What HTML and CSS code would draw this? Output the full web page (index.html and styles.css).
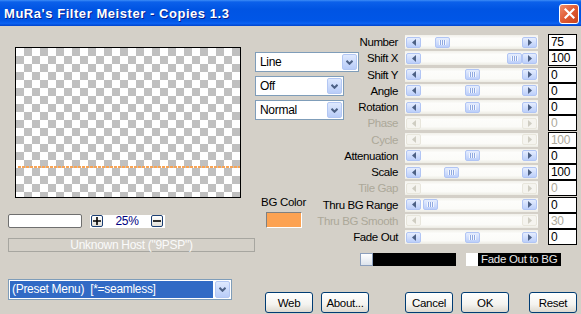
FILE: index.html
```html
<!DOCTYPE html>
<html lang="en">
<head>
    <meta charset="UTF-8">
    <title>MuRa's Filter Meister - Copies 1.3</title>
    <link rel="stylesheet" href="styles.css">
</head>
<body>
    <div class="window">
        <div class="titlebar">
            <span class="title">MuRa's Filter Meister - Copies 1.3</span>
            <span class="close">
                <svg width="11" height="11" viewBox="0 0 11 11"><path d="M1.5 1.5L9.5 9.5M9.5 1.5L1.5 9.5" stroke="#fff" stroke-width="2.2" stroke-linecap="square"/></svg>
            </span>
        </div>

        <div class="client">
            <!-- preview side -->
            <div class="left">
                <div class="preview"><div class="guide"></div></div>

                <div class="zoom-row">
                    <span class="field"></span>
                    <span class="zoom-ctl">
                        <span class="pm"><svg width="8" height="8" viewBox="0 0 8 8"><path d="M0 4H8M4 0V8" stroke="#000" stroke-width="1.6"/></svg></span>
                        <span class="pct">25%</span>
                        <span class="pm"><svg width="8" height="8" viewBox="0 0 8 8"><path d="M0 4H8" stroke="#000" stroke-width="1.6"/></svg></span>
                    </span>
                </div>

                <div class="host">Unknown Host ("9PSP")</div>

                <div class="combo preset">
                    <span class="text">(Preset Menu)  [*=seamless]</span>
                    <span class="drop"><svg width="7" height="5" viewBox="0 0 7 5"><polyline points="0.5,0.8 3.5,3.8 6.5,0.8" fill="none" stroke="#4d6185" stroke-width="2"/></svg></span>
                </div>
            </div>

            <!-- controls side -->
            <div class="right">
                <div class="top">
                    <div class="mid">
                        <div class="combo wide">
                            <span class="text">Line</span>
                            <span class="drop"><svg width="7" height="5" viewBox="0 0 7 5"><polyline points="0.5,0.8 3.5,3.8 6.5,0.8" fill="none" stroke="#4d6185" stroke-width="2"/></svg></span>
                        </div>
                        <div class="combo short">
                            <span class="text">Off</span>
                            <span class="drop"><svg width="7" height="5" viewBox="0 0 7 5"><polyline points="0.5,0.8 3.5,3.8 6.5,0.8" fill="none" stroke="#4d6185" stroke-width="2"/></svg></span>
                        </div>
                        <div class="combo short">
                            <span class="text">Normal</span>
                            <span class="drop"><svg width="7" height="5" viewBox="0 0 7 5"><polyline points="0.5,0.8 3.5,3.8 6.5,0.8" fill="none" stroke="#4d6185" stroke-width="2"/></svg></span>
                        </div>

                        <div class="bg-color">
                            <span>BG Color</span>
                            <span class="swatch"></span>
                        </div>
                    </div>

                    <div class="params" id="params"></div>
                </div>

                <div class="fade-row">
                    <span class="knob"></span>
                    <span class="black"></span>
                    <span class="check"></span>
                    <span class="fade-label">Fade Out to BG</span>
                </div>

                <div class="buttons">
                    <span class="btn">Web</span>
                    <span class="btn">About...</span>
                    <span class="btn cancel">Cancel</span>
                    <span class="btn">OK</span>
                    <span class="btn reset">Reset</span>
                </div>
            </div>
        </div>
    </div>

    <script>
        // label, thumb offset in px (null = disabled), value
        var rows = [
            ["Number", 14, "75"],
            ["Shift X", 86, "100"],
            ["Shift Y", 44, "0"],
            ["Angle", 44, "0"],
            ["Rotation", 44, "0"],
            ["Phase", null, "0"],
            ["Cycle", null, "100"],
            ["Attenuation", 44, "0"],
            ["Scale", 23, "100"],
            ["Tile Gap", null, "0"],
            ["Thru BG Range", 2, "0"],
            ["Thru BG Smooth", null, "30"],
            ["Fade Out", 44, "0"]
        ];

        var leftArrow = '<svg width="4" height="7" viewBox="0 0 4 7"><polygon points="4,0 0,3.5 4,7"/></svg>';
        var rightArrow = '<svg width="4" height="7" viewBox="0 0 4 7"><polygon points="0,0 4,3.5 0,7"/></svg>';

        var html = "";
        for (var i = 0; i < rows.length; i++) {
            var r = rows[i];
            var off = r[1] === null ? " off" : "";
            html += '<span class="label' + off + '">' + r[0] + '</span>';
            html += '<span class="bar' + off + '">';
            html += '<span class="arr">' + leftArrow + '</span>';
            html += '<span class="track">';
            if (r[1] !== null) {
                html += '<span class="thumb" style="margin-left:' + r[1] + 'px"></span>';
            }
            html += '</span>';
            html += '<span class="arr">' + rightArrow + '</span>';
            html += '</span>';
            html += '<span class="val' + off + '">' + r[2] + '</span>';
        }
        document.getElementById("params").innerHTML = html;
    </script>
</body>
</html>
```

FILE: styles.css
```css
* {
    margin: 0;
    padding: 0;
    box-sizing: border-box;
}

body {
    background: #d4d0c8;
    font-family: "Liberation Sans", Arial, sans-serif;
    font-size: 11px;
    letter-spacing: -0.3px;
    color: #000;
}

.window {
    width: 581px;
    height: 314px;
    overflow: hidden;
    display: flex;
    flex-direction: column;
}

/* title bar */
.titlebar {
    height: 26px;
    flex: none;
    display: flex;
    align-items: center;
    justify-content: space-between;
    padding: 1px 2px 0 4px;
    background: linear-gradient(#3d8df7 0, #0b60ea 2px, #0054e3 35%, #0056e7 80%, #0b62f2 90%, #0043cc 100%);
}

.title {
    color: #fff;
    font-weight: bold;
    font-size: 13px;
    letter-spacing: 0.55px;
    text-shadow: 1px 1px #0a1e8c;
}

.close {
    width: 20px;
    height: 20px;
    border: 1px solid #fff;
    border-radius: 3px;
    background: linear-gradient(135deg, #f08d6b, #e05a33 50%, #c8431c);
    display: flex;
    align-items: center;
    justify-content: center;
}

.client {
    flex: 1;
    display: flex;
}

/* left side */
.left {
    width: 255px;
    flex: none;
    padding: 21px 0 0 8px;
    display: flex;
    flex-direction: column;
    align-items: flex-start;
}

.preview {
    width: 226px;
    height: 151px;
    margin-left: 7px;
    border: 1px solid #000;
    background-color: #fff;
    background-image: conic-gradient(#c0c0c0 0 25%, transparent 0 50%, #c0c0c0 0 75%, transparent 0);
    background-size: 16px 16px;
    padding-top: 118px;
}

.guide {
    height: 2px;
    margin-left: 2px;
    background: repeating-linear-gradient(90deg, #f7a456 0 3px, transparent 3px 4px);
}

.zoom-row {
    margin-top: 16px;
    display: flex;
    align-items: center;
}

.field {
    width: 74px;
    height: 14px;
    background: #fff;
    border: 1px solid #6f6f6f;
    border-radius: 2px;
}

.zoom-ctl {
    margin-left: 8px;
    width: 75px;
    height: 13px;
    background: #fff;
    display: flex;
    align-items: center;
    justify-content: space-between;
    padding: 0 2px 0 1px;
}

.pm {
    width: 12px;
    height: 12px;
    border: 1px solid #1c3f73;
    border-radius: 2px;
    background: linear-gradient(#fff, #e3e1da);
    display: flex;
    align-items: center;
    justify-content: center;
}

.pct {
    color: #000080;
    font-size: 12px;
}

.host {
    margin-top: 10px;
    width: 247px;
    height: 14px;
    border: 1px solid #a7a6a0;
    color: #fafafa;
    text-align: center;
    line-height: 12px;
    font-size: 12px;
}

/* combo boxes */
.combo {
    display: flex;
    height: 20px;
    background: #fff;
    border: 1px solid #7f9db9;
    padding: 1px;
}

.combo .text {
    flex: 1;
    padding-left: 3px;
    line-height: 16px;
    white-space: pre;
    font-size: 12px;
}

.combo .drop {
    width: 15px;
    flex: none;
    border: 1px solid #b3c7f3;
    border-radius: 2px;
    background: linear-gradient(#dfe9fe, #b8ccf8);
    display: flex;
    align-items: center;
    justify-content: center;
}

.preset {
    margin-top: 27px;
    width: 224px;
    height: 21px;
}

.preset .text {
    background: #316ac5;
    color: #fff;
    margin-right: 2px;
    padding-left: 2px;
    line-height: 17px;
}

/* right side */
.right {
    flex: 1;
    padding: 8px 4px 0 0;
    display: flex;
    flex-direction: column;
}

.top {
    display: flex;
}

.mid {
    width: 104px;
    flex: none;
    padding-top: 18px;
    display: flex;
    flex-direction: column;
    align-items: flex-start;
    gap: 4px;
}

.combo.wide {
    width: 104px;
}

.combo.short {
    width: 89px;
}

.bg-color {
    margin: 72px 0 0 6px;
    width: 45px;
    display: flex;
    flex-direction: column;
    align-items: center;
    line-height: 13px;
    font-size: 11.5px;
    white-space: nowrap;
}

.swatch {
    margin-top: 3px;
    width: 36px;
    height: 16px;
    background: #fca252;
    border: 1px solid;
    border-color: #808080 #fff #fff #808080;
}

.params {
    display: grid;
    grid-template-columns: 39px 133px 32px;
    grid-auto-rows: 16.25px;
    column-gap: 7px;
    align-items: center;
}

.label {
    display: flex;
    justify-content: flex-end;
    white-space: nowrap;
    font-size: 11.5px;
    letter-spacing: -0.4px;
}

.label.off {
    color: #aca899;
}

.bar {
    height: 14px;
    display: flex;
    align-items: center;
    padding: 0 1px;
    background: linear-gradient(#f1f0ea, #fdfdfb 25%, #fbfbf8 75%, #ecebe3);
}

.arr,
.thumb {
    width: 15px;
    height: 11px;
    flex: none;
    border: 1px solid #b1c5f4;
    border-radius: 2px;
    background: linear-gradient(#e5edfe, #bccffa);
    display: flex;
    align-items: center;
    justify-content: center;
    fill: #4d6185;
}

.thumb::after {
    content: "";
    width: 7px;
    height: 5px;
    background: repeating-linear-gradient(90deg, #f4f7fe 0 1px, #8fa9e1 1px 2px);
}

.bar.off .arr {
    border-color: #e8e6dc;
    background: #f5f4ef;
    fill: #cfcdc2;
}

.track {
    flex: 1;
    display: flex;
    align-items: center;
}

.val {
    justify-self: end;
    width: 29px;
    height: 16px;
    border: 1px solid #000;
    background: #fff;
    padding-left: 2px;
    line-height: 14px;
    font-size: 12px;
}

.val.off {
    color: #aca899;
}

/* bottom */
.fade-row {
    display: flex;
    height: 13px;
    margin: 8px 0 0 105px;
}

.knob {
    width: 13px;
    border: 1px solid #8c9fbd;
    background: linear-gradient(#fff, #dde3ec);
}

.black {
    width: 83px;
    background: #000;
}

.check {
    width: 12px;
    margin-left: 10px;
    background: #fff;
}

.fade-label {
    width: 83px;
    background: #000;
    color: #e8e8e8;
    padding-left: 3px;
    line-height: 13px;
    font-size: 11.5px;
    white-space: nowrap;
}

.buttons {
    display: flex;
    gap: 8px;
    margin: 26px 0 0 10px;
}

.btn {
    width: 48px;
    height: 21px;
    border: 1px solid #003c74;
    border-radius: 3px;
    background: linear-gradient(#fff, #f4f3ef 60%, #dcd8cf);
    display: flex;
    align-items: center;
    justify-content: center;
    font-size: 11.5px;
}

.btn.cancel {
    margin-left: 28px;
}

.btn.reset {
    margin-left: 12px;
}
```
